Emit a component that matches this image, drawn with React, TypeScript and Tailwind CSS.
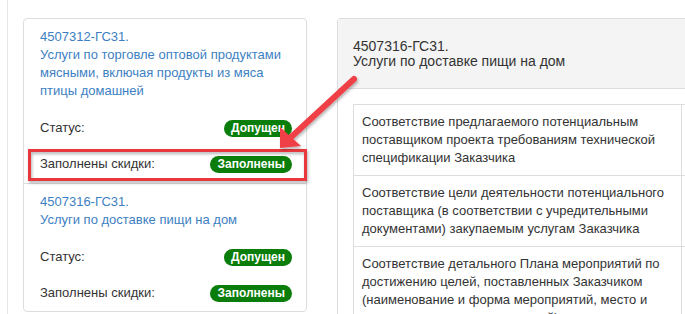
import React from 'react';

type Lot = {
  code: string;
  name: string;
  status: string;
  discounts: string;
};

const lots: Lot[] = [
  {
    code: '4507312-ГС31.',
    name: 'Услуги по торговле оптовой продуктами мясными, включая продукты из мяса птицы домашней',
    status: 'Допущен',
    discounts: 'Заполнены',
  },
  {
    code: '4507316-ГС31.',
    name: 'Услуги по доставке пищи на дом',
    status: 'Допущен',
    discounts: 'Заполнены',
  },
];

const criteria = [
  'Соответствие предлагаемого потенциальным поставщиком проекта требованиям технической спецификации Заказчика',
  'Соответствие цели деятельности потенциального поставщика (в соответствии с учредительными документами) закупаемым услугам Заказчика',
  'Соответствие детального Плана мероприятий по достижению целей, поставленных Заказчиком (наименование и форма мероприятий, место и сроки проведения мероприятий)',
];

function Badge({ text }: { text: string }) {
  return (
    <span className="flex h-[17px] items-center rounded-full bg-[#0a7d0a] px-[7px] text-[12px] font-bold leading-none text-white">
      {text}
    </span>
  );
}

function LotItem({ lot, last }: { lot: Lot; last: boolean }) {
  return (
    <div className={last ? 'pt-[9px] pb-[9px] pl-[16px] pr-[14px]' : 'border-b border-[#ddd] pt-[9px] pb-[10px] pl-[16px] pr-[14px]'}>
      <div className="leading-[18px] text-[#3d7fc2]">
        <div>{lot.code}</div>
        <div>{lot.name}</div>
      </div>
      <div className="mt-[19px] flex h-[18px] items-center justify-between">
        <span>Статус:</span>
        <Badge text={lot.status} />
      </div>
      <div className="mt-[18px] flex h-[18px] items-center justify-between">
        <span>Заполнены скидки:</span>
        <Badge text={lot.discounts} />
      </div>
    </div>
  );
}

export default function App() {
  return (
    <div className="relative h-[314px] w-[685px] overflow-hidden bg-white font-['Liberation_Sans',Arial,sans-serif] text-[13px] text-[#333]">
      <div className="flex h-full">
        {/* Left column with lots */}
        <div className="ml-[7px] h-full shrink-0 border-l border-[#e6e6e6] pl-[15px] pt-[18px]">
          <div className="w-[284px] rounded border border-[#ddd]">
            {lots.map((lot, i) => (
              <LotItem key={lot.code} lot={lot} last={i === lots.length - 1} />
            ))}
          </div>
        </div>

        {/* Selected lot panel */}
        <div className="ml-[30px] mt-[18px] w-[600px] shrink-0 rounded-tl border-l border-t border-[#ddd]">
          <div className="border-b border-[#ddd] bg-[#f4f4f4] pt-[20px] pb-[19px] pl-[15px] text-[14px] leading-[15px]">
            <div>4507316-ГС31.</div>
            <div>Услуги по доставке пищи на дом</div>
          </div>
          <div className="p-[15px]">
            <div className="grid grid-cols-[328px_220px] border-l border-t border-[#ddd]">
              {criteria.map((c) => (
                <React.Fragment key={c}>
                  <div className="border-b border-r border-[#ddd] px-[8px] py-[8px] leading-[18px]">{c}</div>
                  <div className="border-b border-r border-[#ddd]" />
                </React.Fragment>
              ))}
            </div>
          </div>
        </div>
      </div>

      {/* Annotation overlay */}
      <svg className="pointer-events-none absolute inset-0" width="685" height="314" viewBox="0 0 685 314">
        <defs>
          <filter id="shadow" x="-20%" y="-20%" width="140%" height="140%">
            <feDropShadow dx="1" dy="2" stdDeviation="1.5" floodColor="#000" floodOpacity="0.3" />
          </filter>
        </defs>
        <rect x="29.5" y="150.5" width="276" height="29" fill="none" stroke="#e8393e" strokeWidth="3" filter="url(#shadow)" />
        <g filter="url(#shadow)">
          <line x1="354" y1="79" x2="289" y2="139" stroke="#ef4146" strokeWidth="6" strokeLinecap="round" />
          <polygon points="280,148 280,127 301,146" fill="#ef4146" />
        </g>
      </svg>
    </div>
  );
}
